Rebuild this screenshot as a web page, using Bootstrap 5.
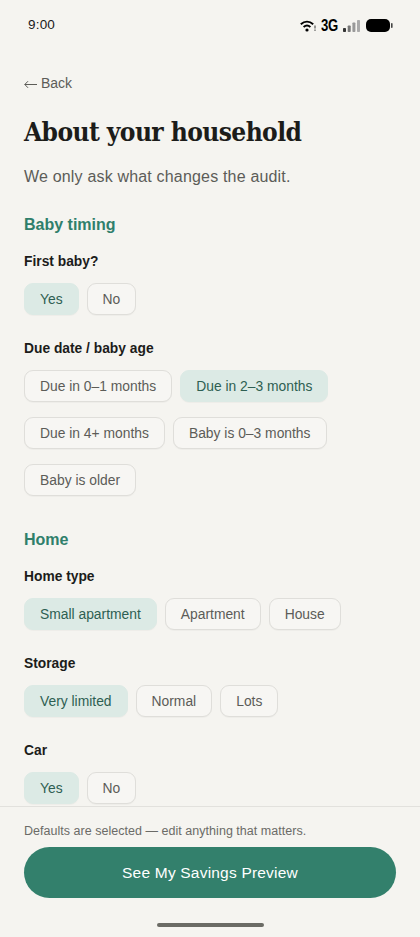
<!DOCTYPE html>
<html lang="en">
<head>
<meta charset="utf-8">
<title>About your household</title>
<link href="https://cdn.jsdelivr.net/npm/bootstrap@5.3.0/dist/css/bootstrap.min.css" rel="stylesheet">
<style>
html,body{height:937px;overflow:hidden}
body{background:#f5f4f0;font-family:"Liberation Sans",Arial,sans-serif;color:#1c1c1a}
.shell{height:937px}
.statusbar{height:50px;padding:1px 27px 0 28px;font-size:13.5px}
.statusbar .clock{color:#1a1a1a;letter-spacing:.2px}
.status-icons{gap:5px}
.net{display:inline-block;width:17px;font-weight:700;font-size:16px;letter-spacing:-.3px;transform:scaleX(.82);transform-origin:left center;color:#000;line-height:1;white-space:nowrap}
.batt{margin-left:1px}
.scrollzone{min-height:0;overflow:hidden;padding:24px 24px 0}
.backlink{color:#5c5c58;font-size:14px;line-height:18px;text-decoration:none}
.backlink svg{vertical-align:-1px;margin-right:4px}
.page-title{font-family:"DejaVu Serif Condensed","DejaVu Serif","Liberation Serif",serif;font-weight:700;font-size:26.1px;line-height:36px;letter-spacing:-.6px;color:#1c1c1a;margin:22px 0 0}
.intro{font-size:16px;line-height:22px;color:#5c5c58;letter-spacing:.18px;margin:16px 0 0}
.sect{font-size:16px;line-height:22px;font-weight:700;color:#2f7f6b;margin:0}
.sect.one{margin-top:26px}
.sect.two{margin-top:33px}
.qlabel{font-size:13.8px;line-height:18px;font-weight:700;color:#1c1c1a;margin:0 0 12px}
.qgroup{margin-top:17px}
.qgroup.next{margin-top:25px}
.chips{gap:15px 8px}
.chip{font-size:13.85px;line-height:18px;height:32px;padding:6px 15px;border:1px solid #dfdeda;border-radius:9px;color:#5c5c58;background:#f7f6f3;box-shadow:0 1px 1px rgba(0,0,0,.03)}
.chip.on,.chip.on:hover{background:#dceae5;border-color:#dceae5;color:#2e5f52}
.chip:hover{color:#5c5c58;background:#f7f6f3;border-color:#dfdeda}
.foot{border-top:1px solid #e2e1dd;padding:15px 24px 0;height:131px;flex:none}
.foot-note{font-size:12.5px;line-height:18px;color:#6b6b67;letter-spacing:.03px;margin:0 0 7px}
.cta{height:51px;border-radius:26px;background:#33806c;border:0;color:#fff;font-size:15.5px;letter-spacing:.2px}
.cta:hover{background:#33806c;color:#fff}
.homebar{width:107px;height:4px;border-radius:2px;background:#6b6b65;margin:25px auto 0}
</style>
</head>
<body>
<div class="shell d-flex flex-column">
  <div class="statusbar d-flex align-items-center justify-content-between">
    <span class="clock">9:00</span>
    <span class="d-flex align-items-center status-icons">
      <svg width="16" height="12" viewBox="0 0 16 12" aria-hidden="true"><path d="M.8 4.2C4.6 .9 9.4 .9 13.2 4.2" fill="none" stroke="#000" stroke-width="2"/><path d="M3.6 7C5.9 5 8.1 5 10.4 7" fill="none" stroke="#000" stroke-width="2"/><circle cx="7" cy="10" r="1.6" fill="#000"/><rect x="14.4" y="5.5" width="1.2" height="3" fill="#555"/><rect x="14.4" y="9.5" width="1.2" height="1.4" fill="#555"/></svg>
      <span class="net">3G</span>
      <svg width="17" height="12" viewBox="0 0 17 12" aria-hidden="true"><rect x="0" y="8" width="3" height="4" rx=".8" fill="#333"/><rect x="4.7" y="5.5" width="3" height="6.5" rx=".8" fill="#777"/><rect x="9.4" y="2.5" width="3" height="9.5" rx=".8" fill="#999"/><rect x="14" y="0" width="3" height="12" rx=".8" fill="#aaa"/></svg>
      <svg class="batt" width="27" height="13" viewBox="0 0 27 13" aria-hidden="true"><rect x="0" y="0" width="24" height="13" rx="5" fill="#000"/><rect x="25" y="4" width="1.6" height="5" rx=".8" fill="#444"/></svg>
    </span>
  </div>
  <div class="scrollzone flex-grow-1">
    <a class="backlink d-block" href="#"><svg width="13" height="9" viewBox="0 0 13 9" aria-hidden="true"><path d="M13 4.5H.8M4 1.2.8 4.5 4 7.8" fill="none" stroke="#5c5c58" stroke-width="1"/></svg>Back</a>
    <h1 class="page-title">About your household</h1>
    <p class="intro">We only ask what changes the audit.</p>

    <h2 class="sect one">Baby timing</h2>
    <div class="qgroup">
      <p class="qlabel">First baby?</p>
      <div class="d-flex flex-wrap chips">
        <button type="button" class="btn chip on">Yes</button>
        <button type="button" class="btn chip">No</button>
      </div>
    </div>
    <div class="qgroup next">
      <p class="qlabel">Due date / baby age</p>
      <div class="d-flex flex-wrap chips">
        <button type="button" class="btn chip">Due in 0–1 months</button>
        <button type="button" class="btn chip on">Due in 2–3 months</button>
        <button type="button" class="btn chip">Due in 4+ months</button>
        <button type="button" class="btn chip">Baby is 0–3 months</button>
        <button type="button" class="btn chip">Baby is older</button>
      </div>
    </div>

    <h2 class="sect two">Home</h2>
    <div class="qgroup">
      <p class="qlabel">Home type</p>
      <div class="d-flex flex-wrap chips">
        <button type="button" class="btn chip on">Small apartment</button>
        <button type="button" class="btn chip">Apartment</button>
        <button type="button" class="btn chip">House</button>
      </div>
    </div>
    <div class="qgroup next">
      <p class="qlabel">Storage</p>
      <div class="d-flex flex-wrap chips">
        <button type="button" class="btn chip on">Very limited</button>
        <button type="button" class="btn chip">Normal</button>
        <button type="button" class="btn chip">Lots</button>
      </div>
    </div>
    <div class="qgroup next">
      <p class="qlabel">Car</p>
      <div class="d-flex flex-wrap chips">
        <button type="button" class="btn chip on">Yes</button>
        <button type="button" class="btn chip">No</button>
      </div>
    </div>
  </div>
  <div class="foot">
    <p class="foot-note">Defaults are selected — edit anything that matters.</p>
    <button type="button" class="btn cta w-100">See My Savings Preview</button>
    <div class="homebar"></div>
  </div>
</div>
<script src="https://cdn.jsdelivr.net/npm/bootstrap@5.3.0/dist/js/bootstrap.bundle.min.js"></script>
</body>
</html>
